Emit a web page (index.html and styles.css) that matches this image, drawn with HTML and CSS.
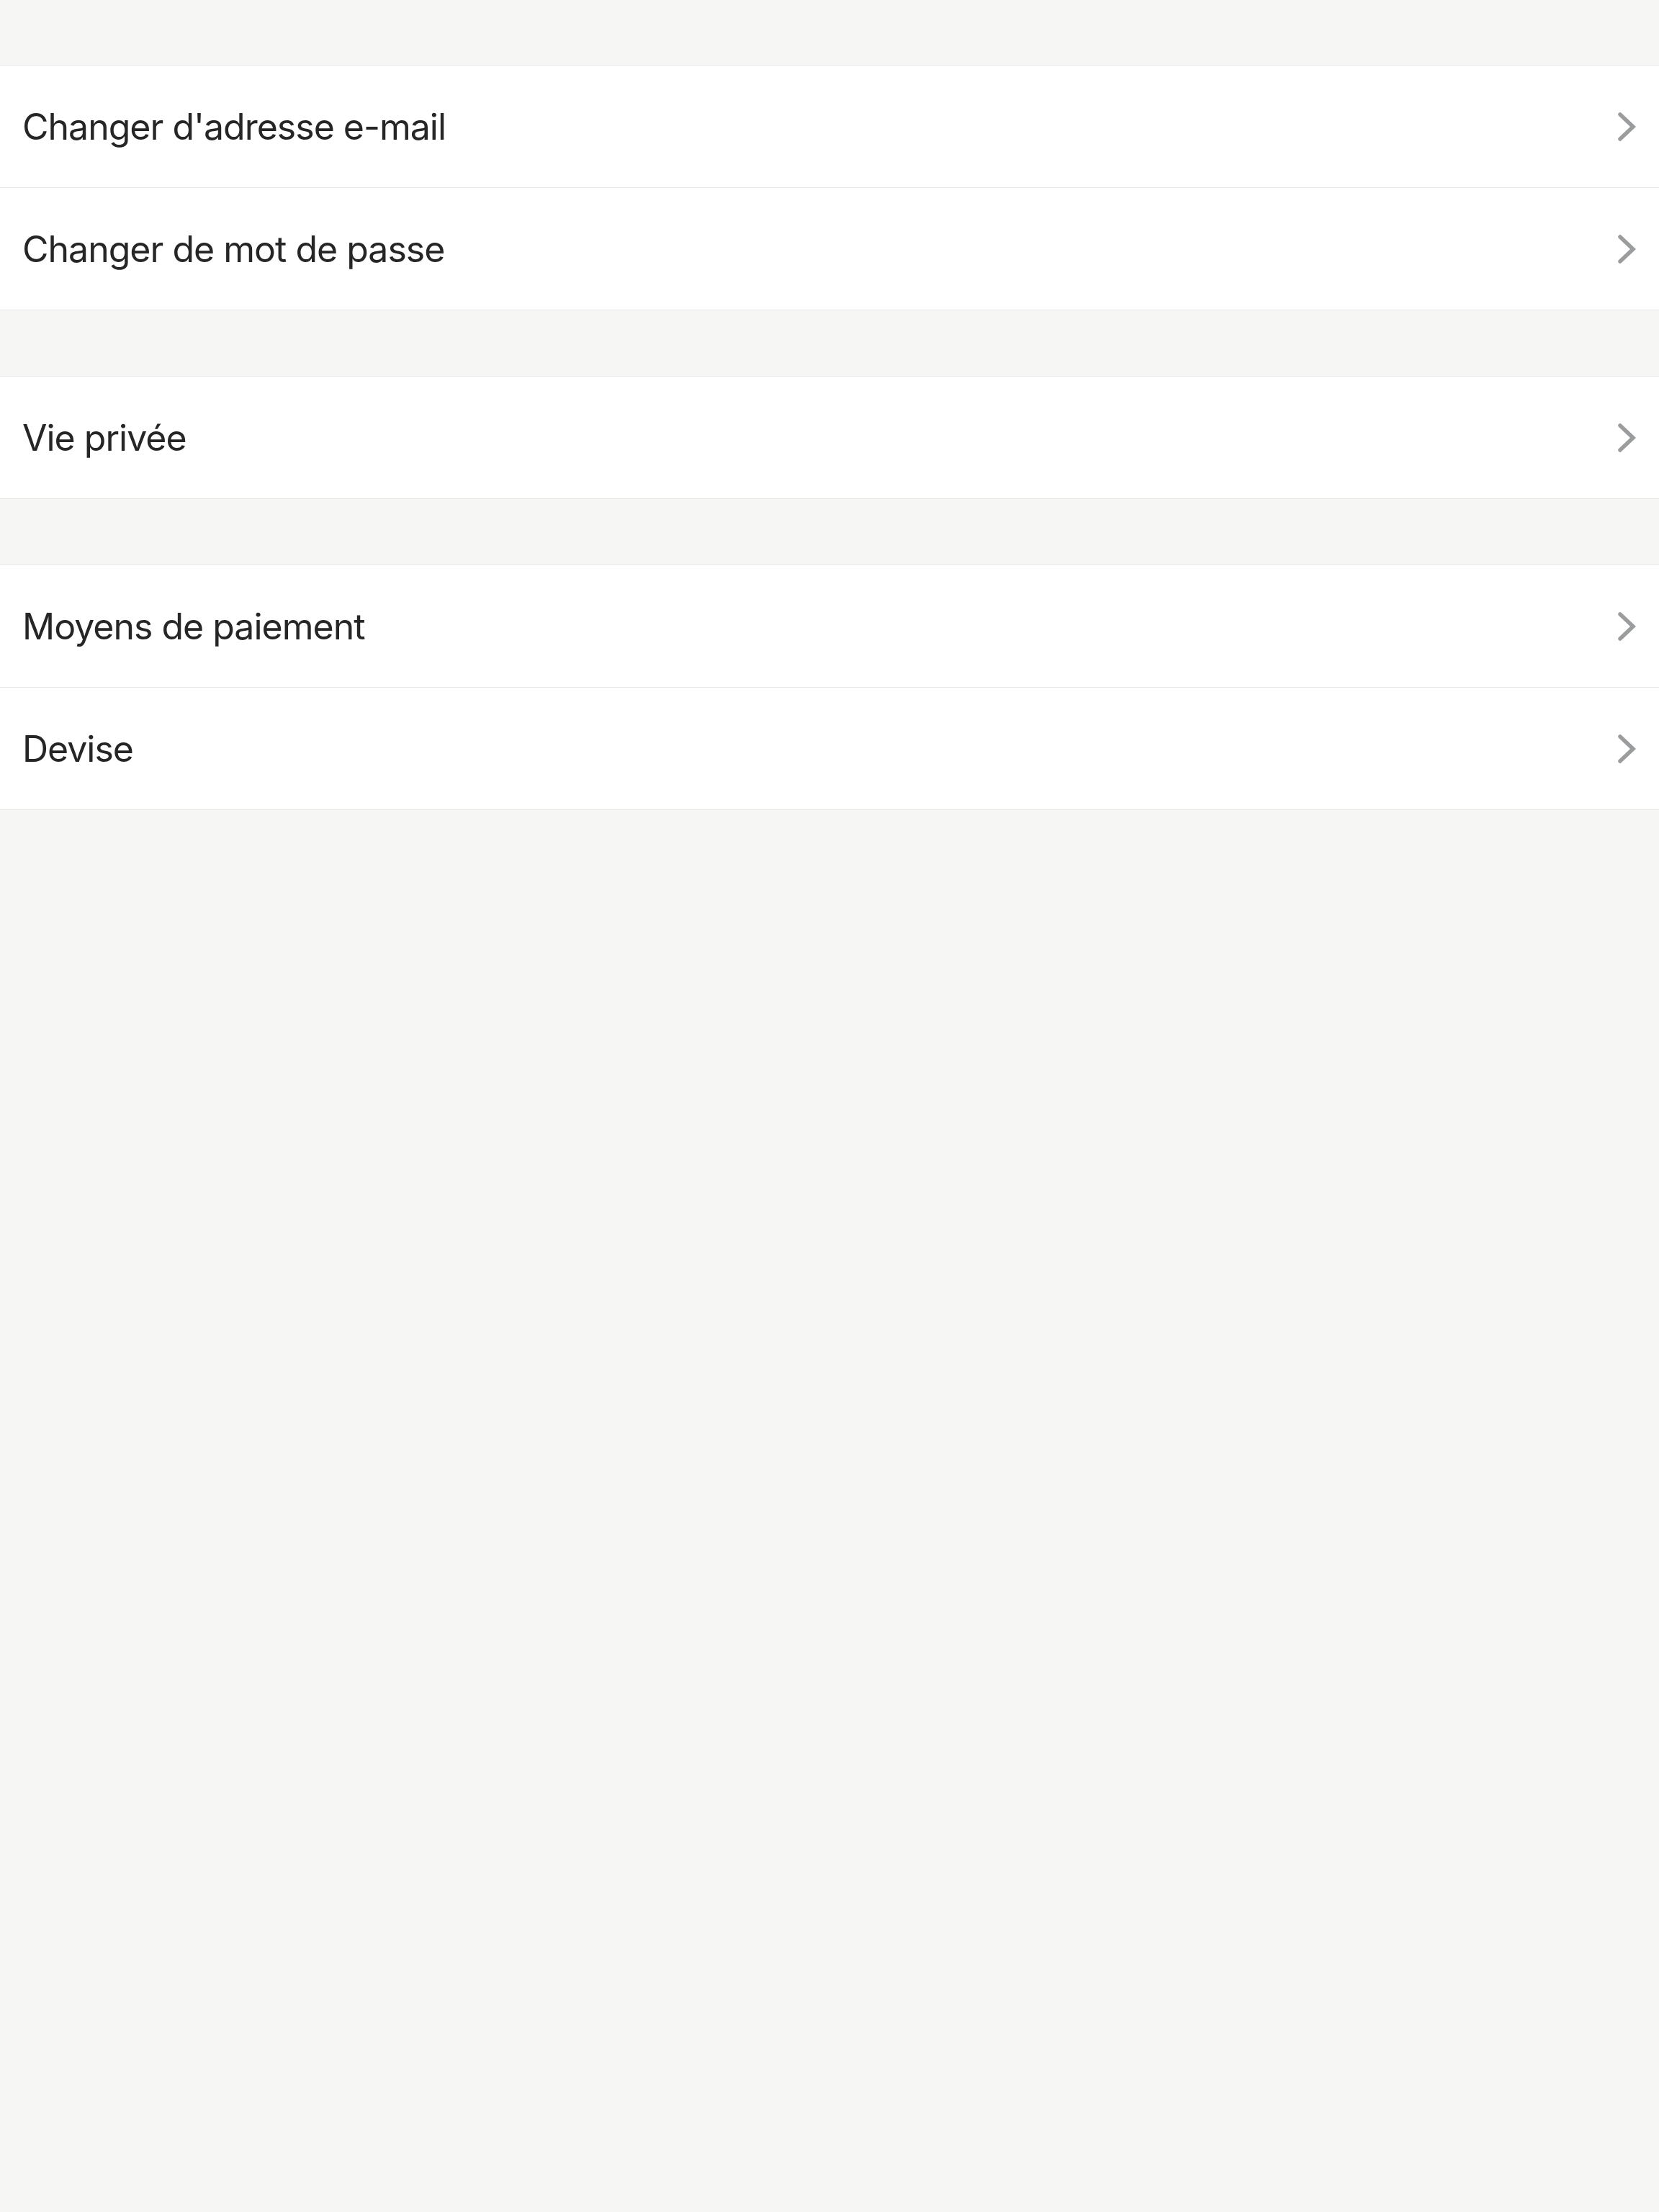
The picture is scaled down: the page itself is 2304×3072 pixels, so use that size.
FILE: index.html
```html
<!DOCTYPE html>
<html lang="fr">
<head>
<meta charset="utf-8">
<title>Paramètres</title>
<link rel="stylesheet" href="styles.css">
</head>
<body>
<main class="settings">
  <section class="group">
    <a class="row" href="#"><span class="label">Changer d'adresse e-mail</span><svg class="chev" viewBox="0 0 26 42" width="26" height="42"><path d="M4 4 L22 21 L4 38"/></svg></a>
    <a class="row" href="#"><span class="label">Changer de mot de passe</span><svg class="chev" viewBox="0 0 26 42" width="26" height="42"><path d="M4 4 L22 21 L4 38"/></svg></a>
  </section>
  <section class="group">
    <a class="row" href="#"><span class="label">Vie privée</span><svg class="chev" viewBox="0 0 26 42" width="26" height="42"><path d="M4 4 L22 21 L4 38"/></svg></a>
  </section>
  <section class="group">
    <a class="row" href="#"><span class="label">Moyens de paiement</span><svg class="chev" viewBox="0 0 26 42" width="26" height="42"><path d="M4 4 L22 21 L4 38"/></svg></a>
    <a class="row" href="#"><span class="label">Devise</span><svg class="chev" viewBox="0 0 26 42" width="26" height="42"><path d="M4 4 L22 21 L4 38"/></svg></a>
  </section>
</main>
</body>
</html>
```
FILE: styles.css
```css
html, body {
  margin: 0;
  padding: 0;
  background: #f6f6f4;
  min-height: 3072px;
}
.settings {
  display: flex;
  flex-direction: column;
  gap: 91px;
  padding-top: 90px;
}
.group {
  background: #ffffff;
  border-top: 1px solid #e8e8e6;
  display: flex;
  flex-direction: column;
}
.row {
  height: 169px;
  border-bottom: 1px solid #e8e8e6;
  display: flex;
  align-items: center;
  justify-content: space-between;
  padding: 0 32px 0 31px;
  text-decoration: none;
  color: #262626;
}
.label {
  font-family: Inter, "Noto Sans", sans-serif;
  font-size: 50px;
  font-weight: 400;
  letter-spacing: -1px;
}
.chev {
  fill: none;
  stroke: #9a9c9d;
  stroke-width: 5.5;
  stroke-linecap: round;
  stroke-linejoin: miter;
}
```
